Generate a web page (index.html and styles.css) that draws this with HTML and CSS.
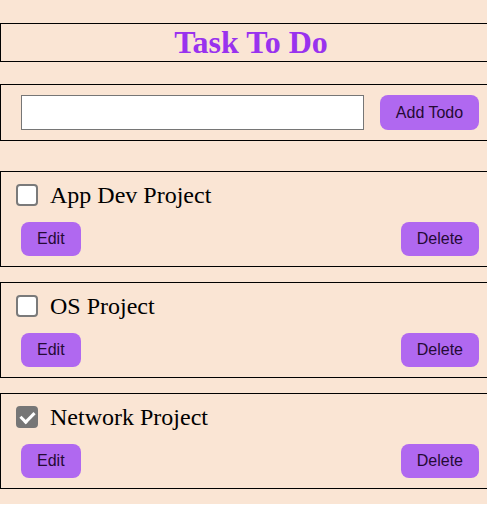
FILE: index.html
```html
<!DOCTYPE html>
<html>
<head>
<meta charset="utf-8">
<link rel="stylesheet" href="styles.css">
</head>
<body>
<div class="page">
  <div class="app">
    <div class="header"><h1 class="title">Task To Do</h1></div>
    <div class="add-bar">
      <input class="todo-input" type="text">
      <button class="btn btn-add">Add Todo</button>
    </div>
    <div class="task">
      <div class="task-row">
        <input class="check" type="checkbox">
        <span class="task-text">App Dev Project</span>
      </div>
      <div class="task-actions">
        <button class="btn">Edit</button>
        <button class="btn">Delete</button>
      </div>
    </div>
    <div class="task">
      <div class="task-row">
        <input class="check" type="checkbox">
        <span class="task-text">OS Project</span>
      </div>
      <div class="task-actions">
        <button class="btn">Edit</button>
        <button class="btn">Delete</button>
      </div>
    </div>
    <div class="task">
      <div class="task-row">
        <input class="check" type="checkbox" checked>
        <span class="task-text">Network Project</span>
      </div>
      <div class="task-actions">
        <button class="btn">Edit</button>
        <button class="btn">Delete</button>
      </div>
    </div>
  </div>
</div>
</body>
</html>
```
FILE: styles.css
```css
html, body {
  margin: 0;
  padding: 0;
  background: #ffffff;
}
.page {
  width: 487px;
  height: 504px;
  overflow: hidden;
  background: #fae5d4;
  padding-top: 23px;
  box-sizing: border-box;
}
.app {
  width: 502px;
  display: flex;
  flex-direction: column;
}
.header {
  height: 39px;
  box-sizing: border-box;
  border: 1px solid #000;
  display: flex;
  align-items: center;
  justify-content: center;
}
.title {
  margin: 0;
  font-family: "Liberation Serif", "Times New Roman", serif;
  font-weight: bold;
  font-size: 32px;
  line-height: 37px;
  color: #9932ee;
}
.add-bar {
  margin-top: 22px;
  border: 1px solid #000;
  padding: 10px 22px 10px 20px;
  display: flex;
  align-items: center;
  gap: 16px;
}
.todo-input {
  width: 343px;
  height: 35px;
  flex-shrink: 0;
  box-sizing: border-box;
  margin: 0;
  border: 1px solid #767676;
  background: #fff;
  padding: 0 4px;
  font-size: 16px;
  outline: none;
}
.btn {
  height: 34px;
  margin: 0;
  padding: 0 16px;
  border: none;
  border-radius: 8px;
  background: #b068f0;
  color: #250a35;
  font-family: "Liberation Sans", Arial, sans-serif;
  font-size: 16px;
  white-space: nowrap;
  flex-shrink: 0;
}
.btn-add {
  height: 35px;
  width: 99px;
  padding: 0;
}
.task {
  margin-top: 15px;
  height: 96px;
  box-sizing: border-box;
  border: 1px solid #000;
  padding: 12px 22px 10px 15px;
  display: flex;
  flex-direction: column;
}
.add-bar + .task {
  margin-top: 30px;
}
.task-row {
  display: flex;
  align-items: center;
  height: 22px;
  gap: 12px;
}
.check {
  appearance: none;
  -webkit-appearance: none;
  position: relative;
  width: 22px;
  height: 22px;
  margin: 0;
  box-sizing: border-box;
  border: 2px solid #7a7a7a;
  border-radius: 4px;
  background: #fff;
}
.check:checked {
  background: #767676;
  border-color: #767676;
}
.check:checked::after {
  content: "";
  position: absolute;
  left: 5px;
  top: 1px;
  width: 6px;
  height: 11px;
  border-right: 3px solid #fff;
  border-bottom: 3px solid #fff;
  transform: rotate(45deg);
}
.task-text {
  font-family: "Liberation Serif", "Times New Roman", serif;
  font-size: 24px;
  color: #000;
}
.task-actions {
  margin-top: 16px;
  padding-left: 5px;
  display: flex;
  justify-content: space-between;
}
```
